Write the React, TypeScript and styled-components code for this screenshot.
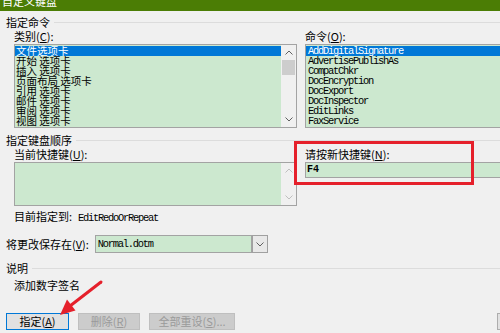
import React from 'react';
import styled, { createGlobalStyle } from 'styled-components';

const GlobalStyle = createGlobalStyle`
  html, body {
    margin: 0;
    padding: 0;
    background: #f0f0f0;
  }
  body {
    font-family: "Noto Sans CJK SC", "Noto Sans", sans-serif;
    font-size: 11px;
    color: #000;
  }
`;

const Dialog = styled.div`
  position: relative;
  width: 500px;
  height: 333px;
  overflow: hidden;
  background: #f0f0f0;
  display: flex;
  flex-direction: column;
`;

const TitleBar = styled.div`
  flex: none;
  height: 11px;
  background: #4b7d05;
  overflow: hidden;
  padding-left: 2px;
`;

const TitleText = styled.div`
  color: #fff;
  font-size: 11px;
  line-height: 12px;
  margin-top: -5px;
`;

const Body = styled.div`
  width: 560px;
  padding: 5px 0 0 6px;
  display: flex;
  flex-direction: column;
`;

const GroupHeader = styled.div<{ $top?: number }>`
  display: flex;
  align-items: center;
  gap: 4px;
  height: 12px;
  line-height: 12px;
  margin-top: ${({ $top }) => $top ?? 0}px;
  &::after {
    content: '';
    flex: 1;
    height: 1px;
    background: #dcdcdc;
  }
`;

const Columns = styled.div<{ $top?: number }>`
  display: grid;
  grid-template-columns: 283px 210px;
  column-gap: 8px;
  padding-left: 8px;
  margin-top: ${({ $top }) => $top ?? 0}px;
`;

const Cell = styled.div`
  position: relative;
  display: flex;
  flex-direction: column;
  gap: 2px;
`;

const Label = styled.div<{ $indent?: number; $top?: number }>`
  line-height: 12px;
  height: 12px;
  white-space: nowrap;
  padding-left: ${({ $indent }) => $indent ?? 0}px;
  margin-top: ${({ $top }) => $top ?? 0}px;
  u {
    text-decoration: underline;
  }
`;

const ListBox = styled.div<{ $height: number }>`
  height: ${({ $height }) => $height}px;
  box-sizing: border-box;
  border: 1px solid #a3a3a3;
  background: #cce8cf;
  display: flex;
  overflow: hidden;
`;

const Rows = styled.div`
  flex: 1;
  padding-top: 1px;
  overflow: hidden;
`;

const Row = styled.div<{ $selected?: boolean; $mono?: boolean }>`
  height: 10px;
  line-height: 10px;
  padding-left: ${({ $mono }) => ($mono ? 2 : 1)}px;
  white-space: pre;
  background: ${({ $selected }) => ($selected ? '#0078d7' : 'transparent')};
  color: ${({ $selected }) => ($selected ? '#fff' : '#000')};
  font-family: ${({ $mono }) =>
    $mono ? '"Liberation Mono", monospace' : '"Noto Sans CJK SC", sans-serif'};
  font-size: ${({ $mono }) => ($mono ? '10.4px' : '10.5px')};
  letter-spacing: ${({ $mono }) => ($mono ? '-1.24px' : '0')};
`;

const ScrollBar = styled.div`
  width: 15px;
  flex: none;
  background: #f0f0f0;
  display: flex;
  flex-direction: column;
  align-items: center;
`;

const ArrowSlot = styled.div`
  height: 15px;
  width: 100%;
  display: flex;
  align-items: center;
  justify-content: center;
`;

const Thumb = styled.div`
  width: 13px;
  height: 15px;
  background: #cdcdcd;
`;

const Spacer = styled.div`
  flex: 1;
`;

const Chevron: React.FC<{ up?: boolean; dim?: boolean }> = ({ up, dim }) => (
  <svg width="8" height="5" viewBox="0 0 8 5">
    <path
      d={up ? 'M0.5 4.5 L4 1 L7.5 4.5' : 'M0.5 0.5 L4 4 L7.5 0.5'}
      fill="none"
      stroke={dim ? '#bfbfbf' : '#606060'}
      strokeWidth="1"
    />
  </svg>
);

const Field = styled.div`
  height: 16px;
  box-sizing: border-box;
  border: 1px solid #a3a3a3;
  background: #cce8cf;
  padding-left: 1px;
  line-height: 14px;
  font-family: "Liberation Mono", monospace;
  font-weight: bold;
  font-size: 10px;
`;

const Mono = styled.span`
  font-family: "Liberation Mono", monospace;
  font-size: 10.4px;
  letter-spacing: -1.24px;
  margin-left: 6px;
`;

const Highlight = styled.div`
  position: absolute;
  left: -11px;
  top: -7px;
  width: 180px;
  height: 44px;
  box-sizing: border-box;
  border: 3px solid #e5202b;
  pointer-events: none;
`;

const SaveRow = styled.div`
  display: flex;
  align-items: center;
  gap: 6px;
  margin-top: 13px;
`;

const Select = styled.div`
  display: flex;
  width: 173px;
  height: 18px;
`;

const SelectField = styled.div`
  flex: 1;
  box-sizing: border-box;
  border: 1px solid #a3a3a3;
  background: #cce8cf;
  padding-left: 2px;
  line-height: 16px;
  font-family: "Liberation Mono", monospace;
  font-size: 10.4px;
  letter-spacing: -1.24px;
`;

const SelectButton = styled.div`
  width: 16px;
  box-sizing: border-box;
  border: 1px solid #a0a0a0;
  background: #e8e8e8;
  display: flex;
  align-items: center;
  justify-content: center;
`;

const ButtonRow = styled.div`
  display: flex;
  gap: 9px;
  width: 553px;
  margin-top: 22px;
`;

const Button = styled.div<{ $width: number; $primary?: boolean; $disabled?: boolean }>`
  width: ${({ $width }) => $width}px;
  height: 17px;
  box-sizing: border-box;
  border: 1px solid
    ${({ $primary, $disabled }) => ($primary ? '#0078d7' : $disabled ? '#bfbfbf' : '#adadad')};
  background: ${({ $disabled }) => ($disabled ? '#cccccc' : '#e1e1e1')};
  color: ${({ $disabled }) => ($disabled ? '#9a9a9a' : '#000')};
  display: flex;
  align-items: center;
  justify-content: center;
  line-height: 15px;
  white-space: nowrap;
  &:last-child {
    margin-left: auto;
  }
`;

const ArrowMark = styled.svg`
  position: absolute;
  left: 50px;
  top: 278px;
`;

const categories = [
  '文件选项卡',
  '开始 选项卡',
  '插入 选项卡',
  '页面布局 选项卡',
  '引用 选项卡',
  '邮件 选项卡',
  '审阅 选项卡',
  '视图 选项卡',
];

const commands = [
  'AddDigitalSignature',
  'AdvertisePublishAs',
  'CompatChkr',
  'DocEncryption',
  'DocExport',
  'DocInspector',
  'EditLinks',
  'FaxService',
];

const App: React.FC = () => (
  <Dialog>
    <GlobalStyle />
    <TitleBar>
      <TitleText>自定义键盘</TitleText>
    </TitleBar>
    <Body>
      <GroupHeader>指定命令</GroupHeader>
      <Columns $top={2}>
        <Cell>
          <Label>
            类别(<u>C</u>):
          </Label>
          <ListBox $height={84}>
            <Rows>
              {categories.map((c, i) => (
                <Row key={c} $selected={i === 0}>
                  {c}
                </Row>
              ))}
            </Rows>
            <ScrollBar>
              <ArrowSlot>
                <Chevron up />
              </ArrowSlot>
              <Thumb />
              <Spacer />
              <ArrowSlot>
                <Chevron />
              </ArrowSlot>
            </ScrollBar>
          </ListBox>
        </Cell>
        <Cell>
          <Label>
            命令(<u>O</u>):
          </Label>
          <ListBox $height={84}>
            <Rows>
              {commands.map((c, i) => (
                <Row key={c} $mono $selected={i === 0}>
                  {c}
                </Row>
              ))}
            </Rows>
          </ListBox>
        </Cell>
      </Columns>

      <GroupHeader $top={6}>指定键盘顺序</GroupHeader>
      <Columns $top={2}>
        <Cell>
          <Label>
            当前快捷键(<u>U</u>):
          </Label>
          <ListBox $height={44}>
            <Rows />
            <ScrollBar>
              <ArrowSlot>
                <Chevron up dim />
              </ArrowSlot>
              <Spacer />
              <ArrowSlot>
                <Chevron dim />
              </ArrowSlot>
            </ScrollBar>
          </ListBox>
        </Cell>
        <Cell>
          <Label>
            请按新快捷键(<u>N</u>):
          </Label>
          <Field>F4</Field>
          <Highlight />
        </Cell>
      </Columns>
      <Label $indent={8} $top={4}>
        目前指定到:<Mono>EditRedoOrRepeat</Mono>
      </Label>

      <SaveRow>
        <Label>
          将更改保存在(<u>V</u>):
        </Label>
        <Select>
          <SelectField>Normal.dotm</SelectField>
          <SelectButton>
            <Chevron />
          </SelectButton>
        </Select>
      </SaveRow>

      <GroupHeader $top={9}>说明</GroupHeader>
      <Label $indent={8} $top={5}>
        添加数字签名
      </Label>

      <ButtonRow>
        <Button $width={63} $primary>
          指定(<u>A</u>)
        </Button>
        <Button $width={62} $disabled>
          删除(<u>R</u>)
        </Button>
        <Button $width={86} $disabled>
          全部重设(<u>S</u>)...
        </Button>
        <Button $width={62} />
      </ButtonRow>
    </Body>

    <ArrowMark width="60" height="45" viewBox="0 0 60 45">
      <line x1="51" y1="4" x2="20" y2="28" stroke="#e5202b" strokeWidth="3" strokeLinecap="round" />
      <polygon points="10,37 25.5,32.5 17,21.5" fill="#e5202b" />
    </ArrowMark>
  </Dialog>
);

export default App;
